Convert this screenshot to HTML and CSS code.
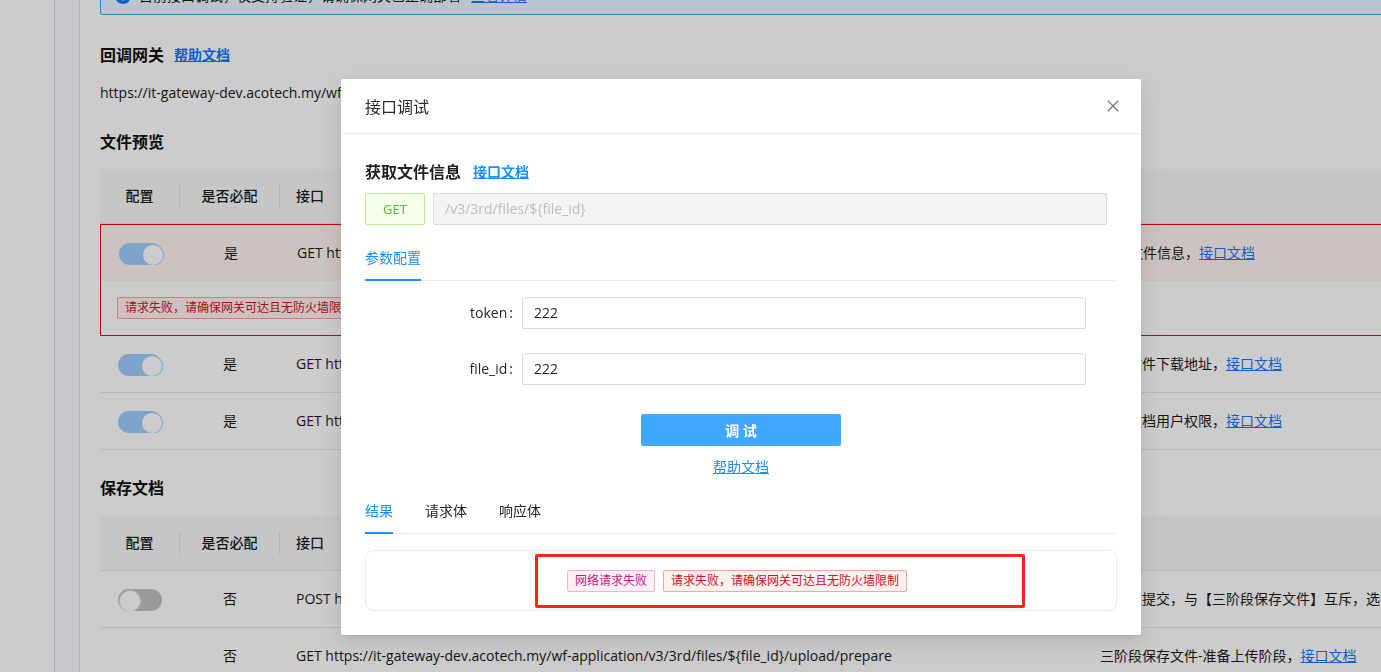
FILE: index.html
```html
<!DOCTYPE html>
<html lang="zh-CN">
<head>
<meta charset="utf-8">
<title>接口调试</title>
<link rel="stylesheet" href="styles.css">
</head>
<body>
<div class="app">
  <aside class="nav-rail"></aside>
  <aside class="sub-rail"></aside>
  <main class="main">
    <div class="content">
      <div class="notice">
        <svg class="notice-icon" width="16" height="16" viewBox="0 0 16 16"><circle cx="8" cy="8" r="8" fill="#1677ff"/><rect x="7.1" y="3.5" width="1.8" height="1.8" fill="#fff"/><rect x="7.1" y="6.5" width="1.8" height="6" fill="#fff"/></svg>
        <span class="notice-text">目前接口调试，仅支持验证，请确保网关已正确部署</span>
        <a class="link">查看详情</a>
      </div>

      <h3 class="sec-title sec-first">回调网关 <a class="link link-sm">帮助文档</a></h3>
      <p class="url">https://it-gateway-dev.acotech.my/wf-application/callback</p>

      <h3 class="sec-title">文件预览</h3>
      <div class="table">
        <div class="tr th">
          <div class="td c-center sep">配置</div>
          <div class="td c-center sep">是否必配</div>
          <div class="td">接口</div>
          <div class="td">说明</div>
        </div>
        <div class="row-err">
          <div class="tr tr-err">
            <div class="td c-center"><span class="switch on"></span></div>
            <div class="td c-center">是</div>
            <div class="td">GET https://it-gateway-dev.acotech.my/wf-application/v3/3rd/files/${file_id}</div>
            <div class="td">获取文件信息，<a class="link">接口文档</a></div>
          </div>
          <div class="err-line"><span class="bg-tag">请求失败，请确保网关可达且无防火墙限制</span></div>
        </div>
        <div class="tr">
          <div class="td c-center"><span class="switch on"></span></div>
          <div class="td c-center">是</div>
          <div class="td">GET https://it-gateway-dev.acotech.my/wf-application/v3/3rd/files/${file_id}/download</div>
          <div class="td">获取文件下载地址，<a class="link">接口文档</a></div>
        </div>
        <div class="tr">
          <div class="td c-center"><span class="switch on"></span></div>
          <div class="td c-center">是</div>
          <div class="td">GET https://it-gateway-dev.acotech.my/wf-application/v3/3rd/files/${file_id}/permission</div>
          <div class="td">获取文档用户权限，<a class="link">接口文档</a></div>
        </div>
      </div>

      <h3 class="sec-title sec-second">保存文档</h3>
      <div class="table">
        <div class="tr th">
          <div class="td c-center sep">配置</div>
          <div class="td c-center sep">是否必配</div>
          <div class="td">接口</div>
          <div class="td">说明</div>
        </div>
        <div class="tr">
          <div class="td c-center"><span class="switch"></span></div>
          <div class="td c-center">否</div>
          <div class="td">POST https://it-gateway-dev.acotech.my/wf-application/v3/3rd/files/${file_id}/save</div>
          <div class="td">一次性提交，与【三阶段保存文件】互斥，选择其一，<a class="link">接口文档</a></div>
        </div>
        <div class="tr">
          <div class="td c-center"></div>
          <div class="td c-center">否</div>
          <div class="td">GET https://it-gateway-dev.acotech.my/wf-application/v3/3rd/files/${file_id}/upload/prepare</div>
          <div class="td">三阶段保存文件-准备上传阶段，<a class="link">接口文档</a></div>
        </div>
      </div>
    </div>
  </main>
</div>

<div class="overlay">
  <div class="modal">
    <div class="modal-header">
      <span class="modal-title">接口调试</span>
      <button class="modal-close" aria-label="关闭"><svg width="12" height="12" viewBox="0 0 12 12"><path d="M0.8 0.8L11.2 11.2M11.2 0.8L0.8 11.2" stroke="#7a7a7a" stroke-width="1.3" fill="none"/></svg></button>
    </div>
    <div class="modal-body">
      <div class="api-title">获取文件信息 <a class="doc-link">接口文档</a></div>
      <div class="api-row">
        <span class="method">GET</span>
        <div class="api-path">/v3/3rd/files/${file_id}</div>
      </div>

      <div class="tabs-nav">
        <div class="tab active">参数配置</div>
      </div>

      <div class="form">
        <div class="form-item">
          <label class="form-label">token</label>
          <div class="form-input">222</div>
        </div>
        <div class="form-item">
          <label class="form-label">file_id</label>
          <div class="form-input">222</div>
        </div>
      </div>

      <div class="actions">
        <button class="btn-primary">调 试</button>
        <a class="help-link">帮助文档</a>
      </div>

      <div class="tabs-nav result-nav">
        <div class="tab active">结果</div>
        <div class="tab">请求体</div>
        <div class="tab">响应体</div>
      </div>

      <div class="result-box">
        <span class="tag tag-magenta">网络请求失败</span>
        <span class="tag tag-red">请求失败，请确保网关可达且无防火墙限制</span>
        <div class="annotation"></div>
      </div>
    </div>
  </div>
</div>
</body>
</html>
```
FILE: styles.css
```css
* { box-sizing: border-box; }
html, body { margin: 0; height: 100%; }
body {
  font-family: "Open Sans", "Noto Sans CJK SC", sans-serif;
  font-size: 14px;
  line-height: 22px;
  color: #1a1a1a;
  background: #fff;
  overflow: hidden;
}

.app { display: flex; height: 672px; overflow: hidden; }
.nav-rail { flex: 0 0 55px; background: #fff; border-right: 1px solid #e2e2e2; }
.sub-rail { flex: 0 0 25px; background: #fafcff; border-right: 1px solid #e2e2e2; }
.main { flex: 1; min-width: 0; padding-left: 20px; overflow: hidden; }
.content { width: 1480px; margin-top: -23px; }

.link { color: #1677ff; text-decoration: underline; cursor: pointer; }

.notice {
  display: flex;
  align-items: center;
  height: 38px;
  padding: 7px 14px;
  border: 1px solid #3aa6f0;
  background: #e8f6ff;
  border-radius: 2px;
}
.notice-icon { margin-right: 8px; flex: 0 0 auto; }
.notice-text { margin-right: 10px; }

.sec-title {
  display: flex;
  align-items: center;
  height: 24px;
  margin: 0 0 15px;
  font-size: 16px;
  line-height: 24px;
  font-weight: 700;
  color: #111;
}
.sec-first { margin-top: 28px; }
.sec-second { margin-top: 26px; margin-bottom: 16px; }
.link-sm { font-size: 14px; font-weight: 700; margin-left: 10px; }
.url { margin: 15px 0 26px; }

.table { width: 1480px; }
.tr {
  display: grid;
  grid-template-columns: 80px 100px 804px 496px;
  align-items: center;
  height: 57px;
  border-bottom: 1px solid #e8e8e8;
}
.td { padding: 0 16px; white-space: nowrap; overflow: hidden; }
.c-center { text-align: center; padding: 0; }
.th { height: 55px; background: #f8f8f8; }
.th .td { font-weight: 500; }
.th .sep { border-right: 1px solid #e3e3e3; line-height: 22px; }

.row-err { border: 1px solid #ff0000; }
.tr-err { background: #fff4f1; border-bottom: none; height: 56px; }
.err-line { height: 54px; display: flex; align-items: center; padding: 0 16px; }
.bg-tag {
  font-size: 12px;
  line-height: 20px;
  padding: 0 7px;
  border: 1px solid #ff9f9a;
  background: #fff1f0;
  color: #cf1322;
  border-radius: 2px;
}

.switch {
  display: inline-block;
  position: relative;
  width: 44px;
  height: 22px;
  border-radius: 11px;
  background: #c2c2c2;
  vertical-align: middle;
}
.switch::after {
  content: "";
  position: absolute;
  top: 1px;
  left: 1px;
  width: 20px;
  height: 20px;
  border-radius: 50%;
  background: #fff;
  border: 1px solid #e0e0e0;
}
.switch.on { background: #9fcdff; }
.switch.on::after { left: 23px; border-color: #9fcdff; }

/* modal */
.overlay { position: fixed; inset: 0; background: rgba(0, 0, 0, 0.2); }
.modal {
  position: absolute;
  left: 341px;
  top: 79px;
  width: 800px;
  background: #fff;
  border-radius: 2px;
  box-shadow: 0 6px 16px rgba(0,0,0,0.08), 0 3px 6px -4px rgba(0,0,0,0.12), 0 9px 28px 8px rgba(0,0,0,0.05);
}
.modal-header {
  display: flex;
  align-items: center;
  justify-content: space-between;
  height: 55px;
  padding: 0 0 0 24px;
  border-bottom: 1px solid #ededed;
}
.modal-title { font-size: 16px; line-height: 22px; color: #2b2b2b; margin-top: 2px; }
.modal-close {
  width: 56px;
  height: 54px;
  border: none;
  background: none;
  padding: 0;
  display: flex;
  align-items: center;
  justify-content: center;
}
.modal-body { padding: 24px; }

.api-title {
  display: flex;
  align-items: center;
  gap: 12px;
  height: 28px;
  font-size: 16px;
  line-height: 28px;
  font-weight: 700;
  color: #1f1f1f;
  margin-bottom: 7px;
}
.doc-link { font-size: 14px; font-weight: 700; color: #1890ff; text-decoration: underline; }

.api-row { display: flex; gap: 8px; width: 742px; height: 32px; }
.method {
  flex: 0 0 60px;
  display: flex;
  align-items: center;
  justify-content: center;
  background: #f6ffed;
  border: 1px solid #b7eb8f;
  border-radius: 2px;
  color: #52c41a;
  font-size: 13px;
}
.api-path {
  flex: 1;
  background: #f4f4f4;
  border: 1px solid #d9d9d9;
  border-radius: 2px;
  padding: 4px 11px;
  color: #bdbdbd;
}

.tabs-nav {
  display: flex;
  gap: 32px;
  margin-top: 10px;
  height: 46px;
  border-bottom: 1px solid #ececec;
}
.tab { position: relative; padding: 12px 0 11px; line-height: 22px; color: #262626; }
.tab.active { color: #1890ff; }
.tab.active::after {
  content: "";
  position: absolute;
  left: 0;
  right: 0;
  bottom: -1px;
  height: 2px;
  background: #1890ff;
}

.form { margin-top: 16px; }
.form-item {
  display: grid;
  grid-template-columns: 157px 564px;
  align-items: center;
  height: 32px;
  margin-bottom: 24px;
}
.form-label { text-align: right; color: #262626; }
.form-label::after { content: ":"; margin: 0 9px 0 2px; }
.form-input {
  height: 32px;
  border: 1px solid #d9d9d9;
  border-radius: 2px;
  padding: 4px 11px;
  color: #262626;
}

.actions { display: flex; flex-direction: column; align-items: center; padding-top: 5px; }
.btn-primary {
  width: 200px;
  height: 32px;
  border: none;
  border-radius: 2px;
  background: #40a9ff;
  color: #fff;
  font-family: inherit;
  font-size: 14px;
  font-weight: 700;
}
.help-link { margin-top: 10px; color: #1890ff; text-decoration: underline; }

.result-nav { margin-top: 10px; }

.result-box {
  position: relative;
  margin-top: 16px;
  border: 1px solid #ececec;
  border-radius: 8px;
  padding: 19px 0 18px;
  display: flex;
  justify-content: center;
}
.tag {
  font-size: 12px;
  line-height: 20px;
  padding: 0 7px;
  border: 1px solid;
  border-radius: 2px;
  margin-right: 8px;
}
.tag-magenta { background: #fff0f6; border-color: #ffadd2; color: #c41d7f; }
.tag-red { background: #fff1f0; border-color: #ffa39e; color: #cf1322; }
.annotation {
  position: absolute;
  left: 169px;
  top: 3px;
  width: 490px;
  height: 54px;
  border: 3px solid #ff2316;
  border-radius: 2px;
}
```
